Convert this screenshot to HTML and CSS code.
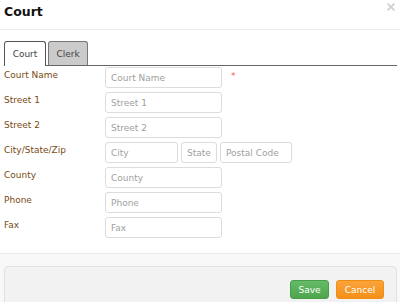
FILE: index.html
```html
<!DOCTYPE html>
<html lang="en">
<head>
    <meta charset="UTF-8">
    <meta name="viewport" content="width=device-width, initial-scale=1.0">
    <title>Court</title>
    <link rel="stylesheet" href="styles.css">
</head>
<body>
    <div class="modal">
        <div class="modal-header">
            <h2>Court</h2>
            <svg class="close" width="8" height="8" viewBox="0 0 8 8" aria-label="Close">
                <path d="M0.5 0.5 L7.5 7.5 M7.5 0.5 L0.5 7.5" stroke="#cfcfcf" stroke-width="1.6" fill="none"/>
            </svg>
        </div>
        <div class="modal-body">
            <ul class="tabs">
                <li class="tab active">Court</li>
                <li class="tab">Clerk</li>
            </ul>
            <form class="form">
                <div class="row">
                    <label>Court Name</label>
                    <input type="text" class="field" placeholder="Court Name">
                    <span class="required">*</span>
                </div>
                <div class="row">
                    <label>Street 1</label>
                    <input type="text" class="field" placeholder="Street 1">
                </div>
                <div class="row">
                    <label>Street 2</label>
                    <input type="text" class="field" placeholder="Street 2">
                </div>
                <div class="row">
                    <label>City/State/Zip</label>
                    <div class="group">
                        <input type="text" class="field city" placeholder="City">
                        <input type="text" class="field state" placeholder="State">
                        <input type="text" class="field zip" placeholder="Postal Code">
                    </div>
                </div>
                <div class="row">
                    <label>County</label>
                    <input type="text" class="field" placeholder="County">
                </div>
                <div class="row">
                    <label>Phone</label>
                    <input type="text" class="field" placeholder="Phone">
                </div>
                <div class="row">
                    <label>Fax</label>
                    <input type="text" class="field" placeholder="Fax">
                </div>
            </form>
        </div>
        <div class="modal-footer">
            <div class="actions">
                <button class="btn save">Save</button>
                <button class="btn cancel">Cancel</button>
            </div>
        </div>
    </div>
</body>
</html>
```

FILE: styles.css
```css
body {
    margin: 0;
    font-family: "DejaVu Sans", Verdana, sans-serif;
    font-size: 9px;
    background: #fff;
}
.modal {
    width: 400px;
    height: 302px;
    display: flex;
    flex-direction: column;
    overflow: hidden;
}
.modal-header {
    flex-shrink: 0;
    height: 29px;
    border-bottom: 1px solid #ececec;
    display: flex;
    justify-content: space-between;
    align-items: flex-start;
    padding: 0 4px;
}
.modal-header h2 {
    margin: 4px 0 0;
    font-size: 12.5px;
    font-weight: bold;
    color: #111;
}
.close {
    margin-top: 3px;
    margin-right: 1px;
}
.modal-body {
    flex-shrink: 0;
    padding: 11px 3px 0 4px;
    height: 212px;
    border-bottom: 1px solid #ececec;
}
.tabs {
    list-style: none;
    margin: 0;
    padding: 0;
    display: flex;
    gap: 2px;
    border-bottom: 1px solid #666;
    height: 24px;
}
.tab {
    width: 40px;
    height: 24px;
    box-sizing: border-box;
    border: 1px solid #777;
    border-bottom: none;
    border-radius: 3px 3px 0 0;
    background: #cbcbcb;
    color: #444;
    text-align: center;
    line-height: 24px;
    font-size: 9px;
}
.tab.active {
    background: #fff;
    border-color: #555;
    width: 42px;
    height: 25px;
    margin-bottom: -1px;
}
.form {
    display: flex;
    flex-direction: column;
    gap: 4px;
    padding-top: 1px;
}
.row {
    display: flex;
    align-items: flex-start;
    height: 21px;
}
.row label {
    width: 101px;
    color: #7a4a14;
    padding-top: 3px;
}
.field {
    width: 117px;
    height: 21px;
    box-sizing: border-box;
    border: 1px solid #dcdcdc;
    border-radius: 3px;
    padding: 0 5px;
    font-family: inherit;
    font-size: 9px;
    color: #555;
}
.field::placeholder {
    color: #a0a0a0;
}
.required {
    color: #f05a5a;
    margin-left: 9px;
    padding-top: 4px;
}
.group {
    display: flex;
    gap: 3px;
}
.field.city {
    width: 73px;
}
.field.state {
    width: 36px;
}
.field.zip {
    width: 72px;
}
.modal-footer {
    flex: 1;
    background: #f8f8f8;
    padding: 12px 3px 0 4px;
}
.actions {
    background: #f2f2f2;
    border: 1px solid #e2e2e2;
    border-radius: 4px;
    height: 60px;
    display: flex;
    justify-content: flex-end;
    align-items: flex-start;
    gap: 7px;
    padding: 13px 12px 0 0;
}
.btn {
    height: 19px;
    border: 1px solid transparent;
    border-radius: 3px;
    color: #fff;
    font-family: inherit;
    font-size: 9px;
    padding: 0;
    cursor: pointer;
}
.save {
    width: 39px;
    background: linear-gradient(#66bb66, #4ea54e);
    border-color: #4a9e4a;
}
.cancel {
    width: 48px;
    background: linear-gradient(#fba33a, #f39019);
    border-color: #ef8c12;
}
```
